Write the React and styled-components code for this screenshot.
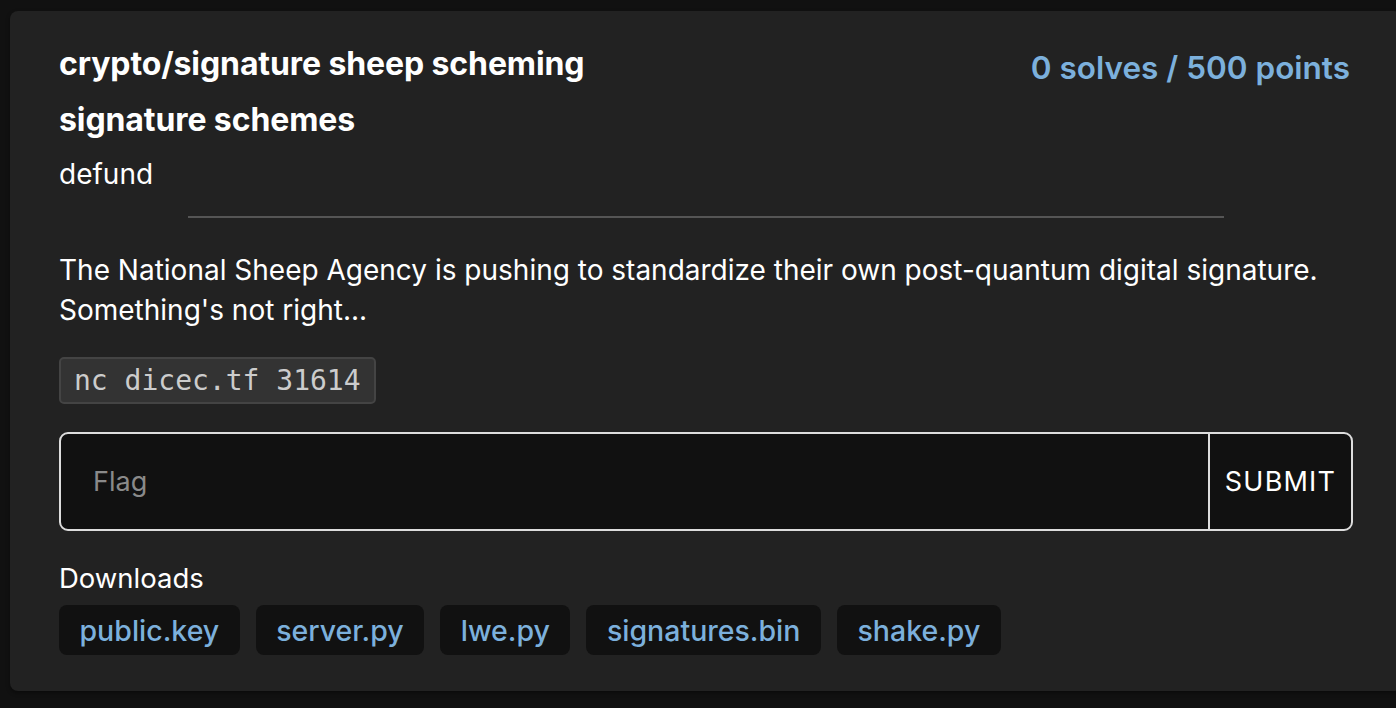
import React from "react";
import styled, { createGlobalStyle } from "styled-components";

const Global = createGlobalStyle`
  html, body { margin: 0; padding: 0; background: #111111; }
  body { font-family: Inter, "Noto Sans", sans-serif; color: #ffffff; overflow: hidden; }
  * { box-sizing: border-box; }
`;

const Page = styled.div`
  width: 1396px;
  height: 708px;
  padding: 11px 0 0 10px;
  background: #111111;
  overflow: hidden;
`;

const Card = styled.section`
  width: 1392px;
  background: #222222;
  border-radius: 8px;
  padding: 34px 49px 36px 49px;
  box-shadow: 0 2px 4px rgba(0, 0, 0, 0.4);
`;

const Header = styled.div`
  display: flex;
  justify-content: space-between;
  align-items: flex-start;
`;

const TitleBlock = styled.div`
  display: flex;
  flex-direction: column;
`;

const Title = styled.h2`
  margin: 0 0 ${(p) => p.$gap || 0}px 0;
  font-size: 32px;
  line-height: 38px;
  font-weight: 700;
  letter-spacing: -0.1px;
`;

const Author = styled.div`
  font-size: 28px;
  line-height: 36px;
  margin-top: 17px;
`;

const Points = styled.div`
  font-size: 31.5px;
  line-height: 38px;
  font-weight: 600;
  color: #7cb0dc;
  margin-top: 4px;
  margin-right: 3px;
`;

const Rule = styled.hr`
  width: 80%;
  margin: 24px auto 32px auto;
  border: none;
  border-top: 2px solid #555555;
`;

const Description = styled.p`
  margin: 0;
  font-size: 28px;
  line-height: 40px;
`;

const Code = styled.code`
  display: inline-block;
  margin-top: 27px;
  font-family: "DejaVu Sans Mono", "Liberation Mono", monospace;
  font-size: 28px;
  line-height: 43px;
  color: #cccccc;
  background: #333333;
  border: 2px solid #444444;
  border-radius: 5px;
  padding: 0 13px;
`;

const FlagForm = styled.form`
  display: flex;
  margin-top: 28px;
  height: 99px;
  border: 2px solid #dddddd;
  border-radius: 9px;
  background: #111111;
  overflow: hidden;
`;

const FlagInput = styled.input`
  flex: 1;
  background: transparent;
  border: none;
  outline: none;
  color: #ffffff;
  font-family: Inter, "Noto Sans", sans-serif;
  font-size: 27px;
  padding: 0 32px;
  &::placeholder { color: #8a8a8a; }
`;

const Submit = styled.button`
  width: 143px;
  background: transparent;
  border: none;
  border-left: 2px solid #dddddd;
  color: #ffffff;
  font-family: Inter, "Noto Sans", sans-serif;
  font-size: 27px;
  letter-spacing: 1.2px;
  padding: 0;
`;

const DownloadsLabel = styled.div`
  margin-top: 30px;
  font-size: 27.5px;
  line-height: 34px;
`;

const Chips = styled.div`
  display: flex;
  gap: 16px;
  margin-top: 10px;
`;

const Chip = styled.a`
  display: inline-flex;
  align-items: center;
  height: 50px;
  padding: 0 20.5px;
  background: #111111;
  border-radius: 8px;
  color: #7cb0dc;
  font-size: 28.5px;
  font-weight: 500;
  text-decoration: none;
`;

const files = ["public.key", "server.py", "lwe.py", "signatures.bin", "shake.py"];

export default function App() {
  return (
    <>
      <Global />
      <Page>
        <Card>
          <Header>
            <TitleBlock>
              <Title $gap={18}>crypto/signature sheep scheming</Title>
              <Title>signature schemes</Title>
              <Author>defund</Author>
            </TitleBlock>
            <Points>0 solves / 500 points</Points>
          </Header>
          <Rule />
          <Description>
            The National Sheep Agency is pushing to standardize their own post-quantum digital signature.
            <br />
            Something's not right...
          </Description>
          <Code>nc dicec.tf 31614</Code>
          <FlagForm onSubmit={(e) => e.preventDefault()}>
            <FlagInput placeholder="Flag" />
            <Submit type="submit">SUBMIT</Submit>
          </FlagForm>
          <DownloadsLabel>Downloads</DownloadsLabel>
          <Chips>
            {files.map((f) => (
              <Chip key={f} href="#">{f}</Chip>
            ))}
          </Chips>
        </Card>
      </Page>
    </>
  );
}
